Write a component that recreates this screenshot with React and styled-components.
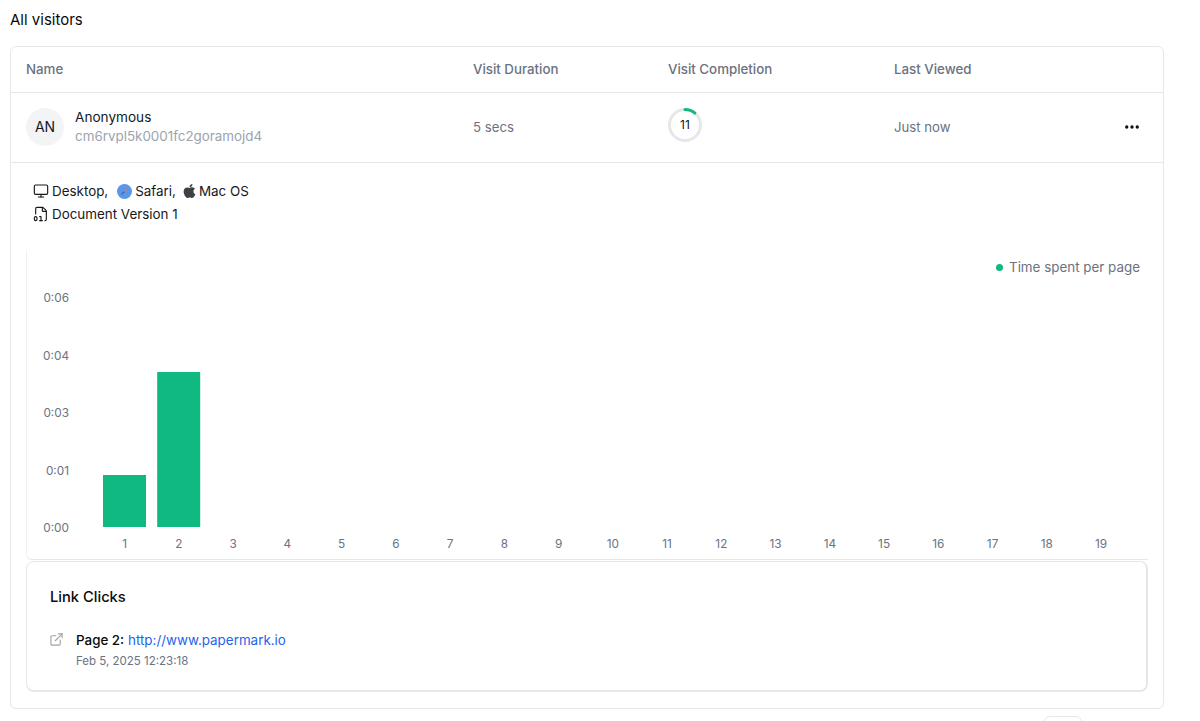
import styled, { createGlobalStyle } from "styled-components";
import { Monitor, FileDigit, Ellipsis, ExternalLink } from "lucide-react";
import { FaApple } from "react-icons/fa";

const GlobalStyle = createGlobalStyle`
  html, body {
    margin: 0;
    padding: 0;
    background: #fff;
    overflow: hidden;
  }
  body {
    font-family: Inter, "Liberation Sans", sans-serif;
    color: #0a0a0a;
  }
`;

const yTicks = [
  { label: "0:06", y: 49 },
  { label: "0:04", y: 107 },
  { label: "0:03", y: 164 },
  { label: "0:01", y: 222 },
  { label: "0:00", y: 279 },
];
const bars = [
  { x: 76, top: 225 },
  { x: 130.2, top: 122 },
];
const pages = Array.from({ length: 19 }, (_, i) => i + 1);

const SafariIcon = () => (
  <svg width="15" height="15" viewBox="0 0 15 15">
    <circle cx="7.5" cy="7.5" r="7.5" fill="#5b96ea" />
    <path d="M4.6 10.4 L7.5 7.5" stroke="#4a5f86" strokeWidth="1.1" />
    <path d="M7.5 7.5 L10.4 4.6" stroke="#c98255" strokeWidth="1.1" />
  </svg>
);

const VisitChart = () => (
  <svg width="1122" height="309" viewBox="0 0 1122 309">
    {yTicks.map((t) => (
      <YLabel key={t.label} x="42" y={t.y} textAnchor="end" dominantBaseline="middle">
        {t.label}
      </YLabel>
    ))}
    {bars.map((b) => (
      <rect key={b.x} x={b.x} y={b.top} width="43" height={277 - b.top} fill="#10b981" />
    ))}
    {pages.map((p, i) => (
      <YLabel key={p} x={97.6 + i * 54.25} y="295" textAnchor="middle" dominantBaseline="middle">
        {p}
      </YLabel>
    ))}
  </svg>
);

export default function App() {
  return (
    <>
      <GlobalStyle />
      <Page>
        <Title>All visitors</Title>
        <Card>
          <HeaderRow>
            <HeadCell>Name</HeadCell>
            <HeadCell>Visit Duration</HeadCell>
            <HeadCell>Visit Completion</HeadCell>
            <HeadCell>Last Viewed</HeadCell>
          </HeaderRow>
          <VisitorRow>
            <NameCell>
              <Avatar>AN</Avatar>
              <NameStack>
                <VisitorName>Anonymous</VisitorName>
                <VisitorId>cm6rvpl5k0001fc2goramojd4</VisitorId>
              </NameStack>
            </NameCell>
            <MutedCell>5 secs</MutedCell>
            <RingCell>
              <Ring>
                <svg width="34" height="34" viewBox="0 0 34 34">
                  <circle cx="17" cy="17" r="15.5" fill="none" stroke="#e5e7eb" strokeWidth="3" />
                  <circle
                    cx="17"
                    cy="17"
                    r="15.5"
                    fill="none"
                    stroke="#10b981"
                    strokeWidth="3"
                    strokeLinecap="round"
                    strokeDasharray="10.7 97.4"
                    transform="rotate(-90 17 17)"
                  />
                </svg>
                <RingValue>11</RingValue>
              </Ring>
            </RingCell>
            <MutedCell>Just now</MutedCell>
            <MenuButton>
              <Ellipsis size={18} strokeWidth={2.4} />
            </MenuButton>
          </VisitorRow>
          <Details>
            <MetaLine>
              <Monitor size={16} strokeWidth={1.7} />
              <span>Desktop,</span>
              <MetaGap $width={3} />
              <SafariIcon />
              <span>Safari,</span>
              <MetaGap $width={1} />
              <AppleIcon />
              <span>Mac OS</span>
            </MetaLine>
            <MetaLine>
              <FileDigit size={16} strokeWidth={1.7} />
              <span>Document Version 1</span>
            </MetaLine>
          </Details>
          <ChartBox>
            <Legend>
              <LegendDot />
              Time spent per page
            </Legend>
            <VisitChart />
          </ChartBox>
          <LinkCard>
            <LinkTitle>Link Clicks</LinkTitle>
            <LinkRow>
              <ExternalLink size={15} color="#a1a1aa" strokeWidth={1.8} />
              <LinkText>
                <LinkLine>
                  <strong>Page 2:</strong> <a href="#papermark">http://www.papermark.io</a>
                </LinkLine>
                <LinkDate>Feb 5, 2025 12:23:18</LinkDate>
              </LinkText>
            </LinkRow>
          </LinkCard>
        </Card>
        <Pager>
          <PagerButton />
        </Pager>
      </Page>
    </>
  );
}

const Page = styled.div`
  width: 1154px;
  margin-left: 10px;
  height: 721px;
  overflow: hidden;
`;
const Title = styled.h2`
  margin: 0;
  height: 46px;
  padding-top: 10px;
  box-sizing: border-box;
  font-size: 15px;
  line-height: 19px;
  font-weight: 400;
  color: #0a0a0a;
`;
const Card = styled.div`
  border: 1px solid #e5e7eb;
  border-radius: 6px;
  box-sizing: border-box;
  height: 663px;
  padding-bottom: 16px;
`;
const columns = "447px 195px 226px 1fr 48px";
const HeaderRow = styled.div`
  display: grid;
  grid-template-columns: ${columns};
  align-items: center;
  height: 46px;
  padding-bottom: 2px;
  border-bottom: 1px solid #e5e7eb;
  box-sizing: border-box;
`;
const HeadCell = styled.div`
  padding-left: 15px;
  font-size: 13.3px;
  font-weight: 500;
  color: #6b7280;
`;
const VisitorRow = styled.div`
  display: grid;
  grid-template-columns: ${columns};
  align-items: center;
  height: 70px;
  padding-bottom: 2px;
  border-bottom: 1px solid #e5e7eb;
  box-sizing: border-box;
`;
const NameCell = styled.div`
  display: flex;
  align-items: center;
  gap: 11px;
  padding-left: 15px;
`;
const Avatar = styled.div`
  width: 38px;
  height: 38px;
  border-radius: 50%;
  background: #f3f4f6;
  display: flex;
  align-items: center;
  justify-content: center;
  font-size: 14px;
  color: #111827;
`;
const NameStack = styled.div`
  display: flex;
  flex-direction: column;
  gap: 1px;
`;
const VisitorName = styled.div`
  font-size: 13.6px;
  line-height: 18px;
  color: #111827;
`;
const VisitorId = styled.div`
  font-size: 13.4px;
  line-height: 19px;
  color: #9ca3af;
`;
const MutedCell = styled.div`
  padding-left: 15px;
  font-size: 13.2px;
  color: #6b7280;
`;
const RingCell = styled.div`
  padding: 0 0 4px 15px;
`;
const Ring = styled.div`
  position: relative;
  width: 34px;
  height: 34px;
  svg {
    display: block;
  }
`;
const RingValue = styled.span`
  position: absolute;
  inset: 0;
  display: flex;
  align-items: center;
  justify-content: center;
  font-size: 12px;
  color: #111827;
`;
const MenuButton = styled.div`
  display: flex;
  justify-content: center;
  color: #0a0a0a;
  padding-right: 14px;
`;
const Details = styled.div`
  padding: 19px 0 0 22px;
  height: 87px;
  box-sizing: border-box;
  display: flex;
  flex-direction: column;
  gap: 5px;
`;
const MetaLine = styled.div`
  display: flex;
  align-items: center;
  gap: 3px;
  height: 18px;
  font-size: 13.4px;
  color: #18181b;
`;
const MetaGap = styled.span`
  width: ${(p) => p.$width}px;
`;
const AppleIcon = styled(FaApple)`
  width: 13px;
  height: 16px;
  color: #3f3f46;
`;
const ChartBox = styled.div`
  position: relative;
  margin: 0 15px;
  height: 310px;
  border-left: 1px solid #f0f1f4;
  border-bottom: 1px solid #e5e7eb;
  border-bottom-left-radius: 6px;
  box-sizing: border-box;
  svg {
    display: block;
  }
`;
const YLabel = styled.text`
  font-size: 11.8px;
  fill: #6b7280;
`;
const Legend = styled.div`
  position: absolute;
  top: 9px;
  right: 8px;
  display: flex;
  align-items: center;
  gap: 6px;
  font-size: 13.4px;
  color: #6b7280;
`;
const LegendDot = styled.span`
  width: 7px;
  height: 7px;
  border-radius: 50%;
  background: #10b981;
`;
const LinkCard = styled.div`
  margin: 1px 15px 0;
  height: 131px;
  box-sizing: border-box;
  border: 1px solid #e5e7eb;
  border-width: 1px 2px 2px 1px;
  border-radius: 8px;
  padding: 26px 23px 0;
`;
const LinkTitle = styled.div`
  font-size: 14.7px;
  line-height: 18px;
  font-weight: 500;
  color: #0a0a0a;
`;
const LinkRow = styled.div`
  display: flex;
  gap: 12px;
  margin-top: 25px;
  margin-left: -1px;
  align-items: flex-start;
  svg {
    margin-top: 1px;
  }
`;
const LinkText = styled.div`
  display: flex;
  flex-direction: column;
  gap: 4px;
`;
const LinkLine = styled.div`
  font-size: 13.4px;
  line-height: 18px;
  color: #0a0a0a;
  strong {
    font-weight: 500;
  }
  a {
    color: #2563eb;
    text-decoration: none;
  }
`;
const LinkDate = styled.div`
  font-size: 11.5px;
  line-height: 16px;
  color: #6b7280;
`;
const Pager = styled.div`
  display: flex;
  justify-content: flex-end;
  padding: 7px 82px 0 0;
`;
const PagerButton = styled.div`
  width: 38px;
  height: 32px;
  border: 1px solid #e5e7eb;
  border-radius: 6px;
  box-sizing: border-box;
`;
